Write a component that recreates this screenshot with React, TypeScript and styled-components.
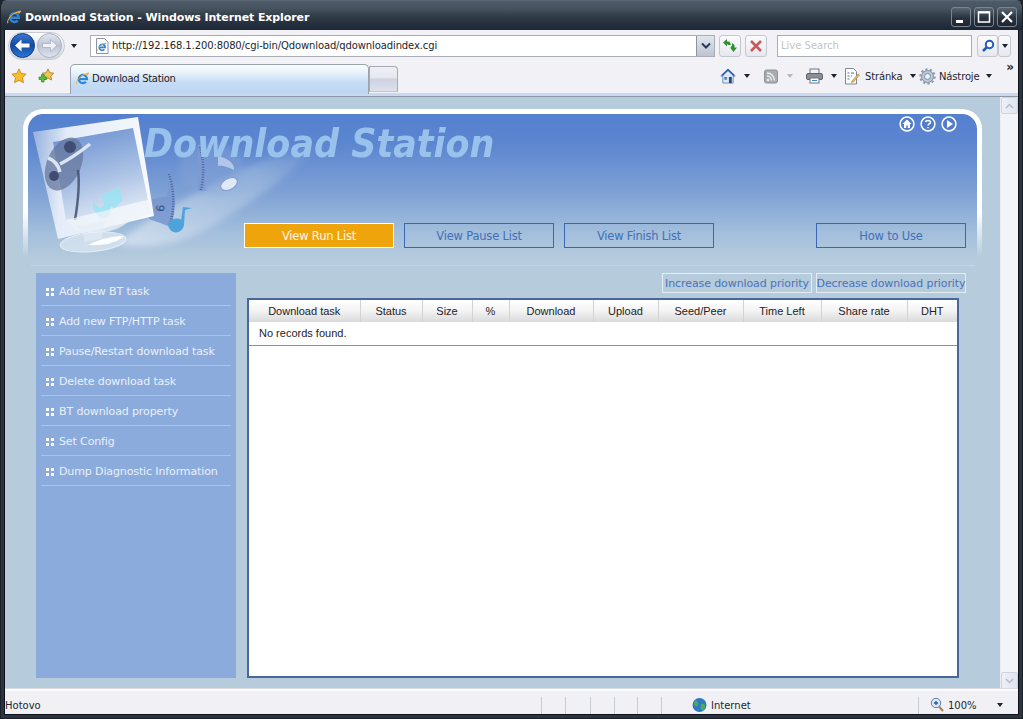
import React from "react";
import styled, { createGlobalStyle } from "styled-components";

const Global = createGlobalStyle`
  html, body { margin: 0; padding: 0; overflow: hidden; background: #1c2430; }
  * { box-sizing: border-box; }
`;

const UI = `"DejaVu Sans", Verdana, sans-serif`;
const ARIAL = `"Liberation Sans", Arial, sans-serif`;

const Win = styled.div`
  width: 1023px; height: 719px; display: flex; flex-direction: column;
  background: #2b3440; border-radius: 7px 7px 0 0; overflow: hidden;
  border: 1px solid #1a2028; border-top-color: #5a6674;
`;
const TitleBar = styled.div`
  height: 29px; flex: none; display: flex; align-items: center; padding: 3px 5px 0 5px; gap: 3px;
  background: linear-gradient(#4f5b69 0, #47535f 25%, #2f3a47 55%, #1d2634 100%);
`;
const TitleText = styled.div`
  font: bold 11px ${UI}; color: #fff; flex: 1; white-space: nowrap; letter-spacing: -0.1px;
`;
const WinButtons = styled.div`display: flex; gap: 3px;`;
const WinBtn = styled.div`
  width: 20px; height: 20px; border: 1px solid #7a8590; border-radius: 3px;
  background: linear-gradient(#5a6673, #28323e 55%, #1e2632);
  display: flex; align-items: center; justify-content: center;
`;
const Frame = styled.div`
  flex: 1; display: flex; flex-direction: column; margin: 0 3px 3px 3px; min-height: 0;
  border-left: 1px solid #0d1218; border-right: 1px solid #0d1218; border-bottom: 1px solid #0d1218;
`;
const Chrome = styled.div`
  height: 67px; flex: none; background: #f2f2f6; display: flex; flex-direction: column;
  border-bottom: 1px solid #8a97a5; box-shadow: inset 0 -3px 0 #c8d8ee;
`;
const AddressRow = styled.div`
  height: 30px; flex: none; display: flex; align-items: center; padding: 1px 0 0 3px;
`;
const NavPill = styled.div`
  display: flex; align-items: center; gap: 2px; height: 28px; width: 57px;
  border-radius: 14px; background: linear-gradient(#fdfdfe, #d4d8e0);
  padding: 0 1px; border: 1px solid #c6cad2;
`;
const SmallArrow = styled.span<{ $dim?: boolean }>`
  display: inline-block; width: 0; height: 0; border-left: 3.5px solid transparent; border-right: 3.5px solid transparent;
  border-top: 4px solid ${(p) => (p.$dim ? "#b5b8bd" : "#1c2230")};
`;
const NavDrop = styled.div`width: 18px; margin: 0 7px 0 0; display: flex; justify-content: center;`;
const AddressBox = styled.div`
  width: 625px; height: 22px; background: #fff; border: 1px solid #a9adb5; display: flex; align-items: center; padding-left: 3px; gap: 1px;
`;
const UrlText = styled.div`
  flex: 1; font: 10px ${UI}; color: #22262c; white-space: nowrap; letter-spacing: -0.12px; padding-left: 1px;
`;
const ComboBtn = styled.div`
  width: 18px; height: 20px; background: linear-gradient(#e2e6ee, #bcc4d2); border-left: 1px solid #8b93a0;
  display: flex; align-items: center; justify-content: center;
`;
const ToolBtn = styled.div<{ $ml?: number; $w?: number }>`
  width: ${(p) => p.$w ?? 22}px; height: 22px; margin-left: ${(p) => p.$ml ?? 0}px;
  border: 1px solid #c4c7cf; border-radius: 3px; background: linear-gradient(#fbfbfd, #e7e8ee);
  display: flex; align-items: center; justify-content: center;
`;
const SearchBox = styled.div`
  width: 195px; height: 22px; margin-left: 10px; background: #fff; border: 1px solid #a9adb5;
  font: 10px ${UI}; color: #c3c3c3; display: flex; align-items: center; padding-left: 3px;
`;
const TabRow = styled.div`
  height: 34px; flex: none; display: flex; align-items: flex-end; padding-left: 5px; position: relative;
`;
const FavIcons = styled.div`
  width: 60px; height: 100%; display: flex; align-items: center; gap: 11px; padding: 0 0 2px 1px;
`;
const ActiveTab = styled.div`
  width: 299px; height: 30px; border: 1px solid #9aa3ae; border-bottom: none; border-radius: 5px 5px 0 0;
  background: linear-gradient(#fafcfe, #eaf3fb 25%, #c6dcf5 60%, #bcd5f3);
  display: flex; align-items: center; padding: 0 0 2px 4px; gap: 2px;
  font: 10px ${UI}; color: #1d2229; letter-spacing: -.3px;
`;
const NewTab = styled.div`
  width: 29px; height: 26px; margin-bottom: 2px; border: 1px solid #a5abb5; border-bottom: 1px solid #c0c4cc; border-radius: 0 4px 0 0;
  background: linear-gradient(#eef0f5 0, #e6e8f0 45%, #cdd2e0 50%, #dde0ea);
`;
const Tools = styled.div`
  flex: 1; display: flex; align-items: center; height: 100%; padding: 0 0 2px 322px; font: 10px ${UI}; color: #22262c; letter-spacing: -.15px;
`;
const ToolItem = styled.div<{ $w: number }>`
  width: ${(p) => p.$w}px; display: flex; align-items: center; flex: none; white-space: nowrap;
`;
const ToolLabel = styled.span<{ $ml: number }>`margin: 0 7px 0 ${(p) => p.$ml}px;`;
const ToolGap = styled.span<{ $w: number }>`width: ${(p) => p.$w}px; flex: none;`;
const Chevrons = styled.div`
  position: absolute; right: 4px; top: 0; font: bold 12px ${UI}; color: #1c2230;
`;

const PageRow = styled.div`flex: 1; display: flex; min-height: 0;`;
const Page = styled.div`
  flex: 1; background: #b6cbdc; padding: 12px 18px 0 18px; min-width: 0; display: flex; flex-direction: column;
`;
const ScrollBar = styled.div`
  width: 18px; flex: none; background: #f3f4f7; border-left: 1px solid #eceef2; display: flex; flex-direction: column; justify-content: space-between;
`;
const ScrollBtn = styled.div`
  height: 17px; background: linear-gradient(90deg, #edf0f6, #dfe4ee); border: 1px solid #ced3dd; border-radius: 2px; display: flex; align-items: center; justify-content: center;
`;
const HeaderShell = styled.div`
  width: 959px; height: 156px; flex: none; padding: 5px 5px 0 5px; border-radius: 20px 20px 0 0;
  background: linear-gradient(#fff 0, #fff 66%, rgba(255,255,255,0) 95%);
`;
const Banner = styled.div`
  position: relative; height: 151px; border-radius: 15px 15px 0 0; overflow: hidden;
  background: linear-gradient(#5480cf 0, #5d86d0 20%, #7c9fd4 50%, #a2bedc 78%, #b6cbdc 96%);
  display: flex; flex-direction: column; padding: 2px 11px 0 216px;
`;
const TopIcons = styled.div`display: flex; justify-content: flex-end; gap: 5px; height: 16px; margin-right: 9px;`;
const Logo = styled.div`
  font: italic bold 35px ${UI}; color: #9cc6ee; height: 40px; line-height: 40px; margin: -8px 0 0 -100px; white-space: nowrap;
  letter-spacing: 0; position: relative; z-index: 1; transform: scaleY(1.12); opacity: .95;
`;
const Nav = styled.nav`display: flex; gap: 10px; margin-top: 59px; position: relative; z-index: 2;`;
const NavBtn = styled.div<{ $active?: boolean; $push?: boolean }>`
  width: 150px; height: 25px; display: flex; align-items: center; justify-content: center;
  font: 11.5px ${UI}; letter-spacing: -.2px;
  color: ${(p) => (p.$active ? "#fdf6e6" : "#4170b8")};
  background: ${(p) => (p.$active ? "#f0a40b" : "transparent")};
  border: 1px solid ${(p) => (p.$active ? "#fff" : "#3a67b5")};
  margin-left: ${(p) => (p.$push ? "auto" : "0")};
`;
const Art = styled.svg`position: absolute; left: 0; top: 0;`;
const Rule = styled.div`
  width: 944px; height: 1px; margin: 0 0 7px 8px; background: #c6d5e2; flex: none;
`;
const Main = styled.div`display: flex; gap: 11px; padding-left: 13px; flex: none;`;
const Side = styled.aside`
  width: 200px; height: 405px; background: #8cabdd; padding: 3px 5px 0 5px; flex: none;
`;
const SideItem = styled.div`
  height: 30px; border-bottom: 1px solid #a9c2e6; display: flex; align-items: center; gap: 5px; padding: 2px 0 0 5px;
  font: 11px ${UI}; letter-spacing: -.12px; color: #e9f0fa; white-space: nowrap;
`;
const Dots = styled.span`
  display: grid; grid-template-columns: 3px 3px; grid-auto-rows: 3px; gap: 2px; flex: none; width: 8px;
`;
const Dot = styled.i`display: block; background: #fff;`;
const Right = styled.div`width: 719px; flex: none;`;
const Priority = styled.div`display: flex; justify-content: flex-end; gap: 4px; height: 20px; margin-bottom: 5px;`;
const PriorityBtn = styled.div`
  width: 150px; height: 20px; border: 1px solid #e4edf4; color: #4a73b8; white-space: nowrap;
  font: 11px ${UI}; letter-spacing: -.1px; display: flex; align-items: center; justify-content: center;
`;
const TableBox = styled.div`
  width: 712px; height: 380px; background: #fff; border: 2px solid #46689f;
`;
const Table = styled.table`
  width: 708px; table-layout: fixed; border-collapse: collapse; font: 11px ${ARIAL}; color: #1f2226;
`;
const Th = styled.th`
  height: 22px; padding: 0; font-weight: normal; text-align: center;
  background: linear-gradient(#fff, #f3f3f3 50%, #d9d9d9);
  border-right: 1px solid #d3d3d3;
  &:last-child { border-right: none; }
`;
const Td = styled.td`
  height: 23px; padding: 0 0 1px 10px; border-bottom: 1px solid #8b8f96; background: #fff;
`;

const StatusBar = styled.div`
  height: 25px; flex: none; background: #f1f1f5; display: flex; align-items: center; padding-top: 5px;
  font: 10px ${UI}; color: #22262c; border-top: 2px solid #fafafc; box-shadow: 0 -1px 0 #d8dce2;
`;
const StatusText = styled.div`width: 536px;`;
const Cell = styled.div<{ $w: number }>`
  width: ${(p) => p.$w}px; height: 17px; border-left: 1px solid #c9ccd2; flex: none; display: flex; align-items: center; gap: 4px;
`;

const IE = ({ s = 16 }: { s?: number }) => (
  <svg width={s} height={s} viewBox="0 0 16 16" style={{ flex: "none" }}>
    <path d="M4.500 8.700h8.300A4.400 4.400 0 1 0 11.700 11.500" fill="none" stroke="#2d86d6" strokeWidth="2.400" />
    <path d="M1.500 14.500C-.5 11.500 6 3 14.500 1.500c1.500 1-1 3-2 3.500C13.500 3 10 3 6 6.500 3 9.500 1.500 12 2.500 13.500z" fill="#eeb03f" />
  </svg>
);
const NavCircle = ({ dir, on }: { dir: "l" | "r"; on?: boolean }) => (
  <svg width="25" height="25" viewBox="0 0 25 25" style={{ flex: "none" }}>
    <defs>
      <linearGradient id={"c" + dir} x1="0" y1="0" x2="0" y2="1">
        <stop offset="0" stopColor={on ? "#3e7ad0" : "#e3e7ef"} />
        <stop offset=".5" stopColor={on ? "#114aa4" : "#bcc4d4"} />
        <stop offset="1" stopColor={on ? "#2e78d6" : "#dfe4ee"} />
      </linearGradient>
    </defs>
    <circle cx="12.500" cy="12.500" r="12" fill={`url(#c${dir})`} stroke={on ? "#1a3f80" : "#aab1bf"} />
    <path
      d={dir === "l" ? "M5 12.500 11.500 6.500v4h8v4h-8v4z" : "M20 12.500 13.500 6.500v4h-8v4h8v4z"}
      fill={on ? "#fff" : "#eef1f6"}
      stroke={on ? "none" : "#a0a9ba"}
      strokeWidth=".7"
    />
  </svg>
);
const PageIcon = () => (
  <svg width="16" height="16" viewBox="0 0 16 16" style={{ flex: "none" }}>
    <path d="M2.500.5h8l3.500 3.500v11.500h-11.500z" fill="#fff" stroke="#8a94a3" />
    <g transform="translate(2.500 3.500) scale(.68)">
      <path d="M4.500 8.700h8.300A4.400 4.400 0 1 0 11.700 11.500" fill="none" stroke="#2d86d6" strokeWidth="2.400" />
      <path d="M1.500 14.500C-.5 11.500 6 3 14.500 1.500c1.500 1-1 3-2 3.500C13.500 3 10 3 6 6.500 3 9.500 1.500 12 2.500 13.500z" fill="#eeb03f" />
    </g>
  </svg>
);
const Star = () => (
  <svg width="16" height="16" viewBox="0 0 18 18" style={{ flex: "none" }}>
    <path d="M9 1l2.400 5.200 5.600.7-4.100 3.900 1.100 5.700L9 13.700 4 16.500l1.100-5.700L1 6.900l5.600-.7z" fill="#f7bf2e" stroke="#c98a14" />
  </svg>
);
const AddFav = () => (
  <svg width="16" height="16" viewBox="0 0 16 16" style={{ flex: "none" }}>
    <path d="M10 1l1.700 3.700 4 .5-2.900 2.800.8 4L10 10l-3.600 2 .8-4-2.900-2.800 4-.5z" fill="#f3c455" stroke="#b98a2a" />
    <path d="M3.500 6.500h2.500v2.500h2.500v2.500H6V14H3.500v-2.500H1V9h2.500z" fill="#5cbf3a" stroke="#2b8a1e" strokeWidth=".7" />
  </svg>
);
const HomeIcon = () => (
  <svg width="16" height="16" viewBox="0 0 17 17" style={{ flex: "none" }}>
    <path d="M8.500 1 .8 8.500h2.200v7.500h11V8.500h2.200z" fill="#dfe8f3" stroke="#6b8eb8" />
    <path d="M2 8 8.500 2 15 8" fill="none" stroke="#2c5fa8" strokeWidth="1.800" />
    <rect x="9.500" y="9.500" width="3" height="6.500" fill="#24487f" /><rect x="4.500" y="9.500" width="3" height="3" fill="#5a86bd" />
  </svg>
);
const Rss = () => (
  <svg width="14" height="15" viewBox="0 0 14 15" style={{ flex: "none" }}>
    <rect x=".5" y="1" width="13" height="13" rx="2" fill="#a9acaf" stroke="#8f9295" />
    <circle cx="4" cy="11" r="1.300" fill="#eee" />
    <path d="M3 7a4.500 4.500 0 0 1 4.500 4.500M3 4a7.500 7.500 0 0 1 7.500 7.500" fill="none" stroke="#eee" strokeWidth="1.400" />
  </svg>
);
const Printer = () => (
  <svg width="17" height="16" viewBox="0 0 17 16" style={{ flex: "none" }}>
    <rect x="4" y="1" width="9" height="5" fill="#eef0f3" stroke="#70757d" />
    <rect x=".5" y="5.500" width="16" height="6" rx="1.500" fill="#8b9098" stroke="#5f646b" />
    <rect x="4" y="10" width="9" height="5" fill="#fff" stroke="#70757d" />
    <rect x="6" y="12" width="5" height="1" fill="#3f86c9" />
  </svg>
);
const Doc = () => (
  <svg width="16" height="17" viewBox="0 0 16 17" style={{ flex: "none" }}>
    <path d="M1.500.5h8l3 3v12.500h-11z" fill="#fbfcfd" stroke="#7f8894" />
    <path d="M3.500 5h2M3.500 8h2M3.500 11h2M7 5h3M7 8h1" stroke="#6a7380" />
    <path d="M8 13l6-7 1.500 1-6 7-2 .5z" fill="#e8c060" stroke="#a58030" strokeWidth=".6" />
  </svg>
);
const Gear = () => (
  <svg width="17" height="17" viewBox="0 0 17 17" style={{ flex: "none" }}>
    <circle cx="8.500" cy="8.500" r="6" fill="#bcc8d6" stroke="#7f8ea0" />
    <circle cx="8.500" cy="8.500" r="7.200" fill="none" stroke="#8d9bac" strokeWidth="2" strokeDasharray="2.300 2.200" />
    <circle cx="8.500" cy="8.500" r="3" fill="#eaf0f7" stroke="#7890ab" />
  </svg>
);
const Circ = ({ children }: { children: React.ReactNode }) => (
  <svg width="16" height="16" viewBox="0 0 16 16">
    <circle cx="8" cy="8" r="6.900" fill="#4f7ccb" stroke="#fff" strokeWidth="1.500" />
    {children}
  </svg>
);

const columns = [
  ["Download task", 111], ["Status", 62], ["Size", 50], ["%", 37], ["Download", 84],
  ["Upload", 65], ["Seed/Peer", 85], ["Time Left", 78], ["Share rate", 86], ["DHT", 50],
] as const;
const menu = [
  "Add new BT task", "Add new FTP/HTTP task", "Pause/Restart download task", "Delete download task",
  "BT download property", "Set Config", "Dump Diagnostic Information",
];

const BannerArt = () => (
  <Art width="300" height="151" viewBox="0 0 300 151">
    <defs>
      <linearGradient id="frame" x1="0" y1=".4" x2="1" y2=".5">
        <stop offset="0" stopColor="#b4c8e8" stopOpacity=".75" /><stop offset=".25" stopColor="#e4ecf8" /><stop offset="1" stopColor="#f8fafd" />
      </linearGradient>
      <linearGradient id="screen" x1=".3" y1="0" x2=".6" y2="1">
        <stop offset="0" stopColor="#6f92d2" /><stop offset=".55" stopColor="#a8c0e4" /><stop offset="1" stopColor="#e2eaf5" />
      </linearGradient>
      <linearGradient id="swoosh" x1="0" y1="1" x2="1" y2="0">
        <stop offset="0" stopColor="#d3e1ee" stopOpacity=".95" /><stop offset=".7" stopColor="#a8c2e0" stopOpacity=".5" /><stop offset="1" stopColor="#8eaddb" stopOpacity="0" />
      </linearGradient>
      <filter id="soft"><feGaussianBlur stdDeviation=".6" /></filter>
      <filter id="softer"><feGaussianBlur stdDeviation="3" /></filter>
    </defs>
    <path d="M90 130C120 100 180 75 215 55c20-8 55-20 75-25-25 30-55 50-90 72-35 24-70 36-110 28z" fill="url(#swoosh)" filter="url(#softer)" />
    <path d="M172 80c-30-8-28-45 5-50 30-2 45 16 38 34-6 14-24 20-43 16z" fill="#88a6d8" opacity=".4" filter="url(#softer)" />
    <g filter="url(#soft)">
      <path d="M119 86l20-4c2-8 2-16 0-24l3-1c6 18 7 38 1 56l-22-8z" fill="#7a98d0" opacity=".9" />
      <path d="M141 60c5 16 6 33 1 50" stroke="#48669f" strokeWidth="2.500" strokeDasharray="1 1.500" fill="none" />
      <path d="M170 31l5-2 3 48-8 0z" fill="#7d9ad2" opacity=".8" />
      <path d="M172 33c4 13 4 30 1 43" stroke="#4a68a3" strokeWidth="2.500" strokeDasharray="1 1.500" fill="none" />
      <path d="M190 42c10 2 17 8 16 14-6-3-12-5-16-4z" fill="#c7d6ee" opacity=".75" />
    </g>
    <text x="0" y="0" transform="translate(136 98) rotate(-85)" fontFamily={UI} fontSize="11" fill="#34507f">6</text>
    <ellipse cx="201" cy="70" rx="9" ry="5.500" transform="rotate(-28 201 70)" fill="#dfe9f8" stroke="#7d9ad0" />
    <path d="M140 110c1 11 14 11 16 1l1-15 7-2-9-1-2 13c-4-3-10-1-13 4z" fill="#4ea3dc" />
    <path d="M5 18 110 3l16 99-96 23z" fill="url(#frame)" />
    <path d="M25 28 105 14l15 72-82 20z" fill="url(#screen)" />
    <g filter="url(#soft)">
      <ellipse cx="36" cy="50" rx="17" ry="28" transform="rotate(24 36 50)" fill="#66779c" opacity=".75" />
      <circle cx="42" cy="33" r="6" fill="#3f4e72" />
      <circle cx="26" cy="62" r="5" fill="#3f4e72" />
      <path d="M62 30C52 38 44 44 32 50M20 44c6 2 10 6 12 14" stroke="#dbe4f2" strokeWidth="3.500" fill="none" />
      <path d="M50 56c2 16 0 32-3 50" stroke="#41506f" strokeWidth="2.500" fill="none" opacity=".85" />
    </g>
    <path d="M65 88 72 94l4-3-2-10 16-8 5 13-8 8-4-2-2 10-8 3-8-10z" fill="#9be4f3" opacity=".85" filter="url(#soft)" />
    <path d="M38 106l42-10 40-10 4 14-22 6c-10 12-40 18-56 8z" fill="#eef3f9" opacity=".75" />
    <ellipse cx="65" cy="128" rx="33" ry="9.500" transform="rotate(-6 65 128)" fill="#d9e5f1" opacity=".8" stroke="#f4f8fc" />
    <path d="M60 131c14-7 26-9 36-9-6 6-18 10-36 9z" fill="#fff" opacity=".95" />
    <path d="M48 112l30-5c-2 6-4 12-4 18l-18 3c1-6-2-11-8-16z" fill="#e4ecf5" opacity=".6" />
  </Art>
);

export default function App() {
  return (
    <Win>
      <Global />
      <TitleBar>
        <IE s={16} />
        <TitleText>Download Station - Windows Internet Explorer</TitleText>
        <WinButtons>
          <WinBtn><svg width="14" height="14"><rect x="2" y="10" width="7" height="3" fill="#fff" /></svg></WinBtn>
          <WinBtn><svg width="14" height="14"><rect x="1.500" y="2" width="11" height="10" fill="none" stroke="#fff" strokeWidth="1.500" /><rect x="1" y="1.500" width="12" height="2" fill="#fff" /></svg></WinBtn>
          <WinBtn><svg width="14" height="14"><path d="M2 2l10 10M12 2 2 12" stroke="#fff" strokeWidth="2.200" /></svg></WinBtn>
        </WinButtons>
      </TitleBar>
      <Frame>
        <Chrome>
          <AddressRow>
            <NavPill><NavCircle dir="l" on /><NavCircle dir="r" /></NavPill>
            <NavDrop><SmallArrow /></NavDrop>
            <AddressBox>
              <PageIcon />
              <UrlText>http://192.168.1.200:8080/cgi-bin/Qdownload/qdownloadindex.cgi</UrlText>
              <ComboBtn><svg width="10" height="8"><path d="M1 1.500 5 5.500 9 1.500" fill="none" stroke="#2b3a55" strokeWidth="2" /></svg></ComboBtn>
            </AddressBox>
            <ToolBtn $ml={4}>
              <svg width="16" height="15" viewBox="0 0 16 15">
                <path d="M1 4.500 5 1v2.500h2.500L9 7H6.500L5 6H5v2.500z" fill="#2f8f2f" />
                <path d="M11.500 14 15 9.500h-2.500V7L10 5v3l-1 .5v1H8z" fill="#2f8f2f" />
              </svg>
            </ToolBtn>
            <ToolBtn $ml={4}>
              <svg width="14" height="14"><path d="M2 2l10 10M12 2 2 12" stroke="#c85a5a" strokeWidth="2.600" /></svg>
            </ToolBtn>
            <SearchBox>Live Search</SearchBox>
            <ToolBtn $ml={5} $w={21}>
              <svg width="14" height="14"><circle cx="8.500" cy="5.500" r="3.700" fill="#fff" stroke="#1c5cc4" strokeWidth="2" /><path d="M6 8 2 12" stroke="#1c5cc4" strokeWidth="2.500" /></svg>
            </ToolBtn>
            <ToolBtn $w={13}><SmallArrow /></ToolBtn>
          </AddressRow>
          <TabRow>
            <FavIcons><Star /><AddFav /></FavIcons>
            <ActiveTab><IE s={15} />Download Station</ActiveTab>
            <NewTab />
            <Tools>
              <ToolItem $w={44}><HomeIcon /><ToolGap $w={8} /><SmallArrow /></ToolItem>
              <ToolItem $w={42}><Rss /><ToolGap $w={9} /><SmallArrow $dim /></ToolItem>
              <ToolItem $w={38}><Printer /><ToolGap $w={8} /><SmallArrow /></ToolItem>
              <ToolItem $w={75}><Doc /><ToolLabel $ml={5}>Stránka</ToolLabel><SmallArrow /></ToolItem>
              <ToolItem $w={70}><Gear /><ToolLabel $ml={3}>Nástroje</ToolLabel><SmallArrow /></ToolItem>
            </Tools>
            <Chevrons>»</Chevrons>
          </TabRow>
        </Chrome>
        <PageRow>
          <Page>
            <HeaderShell>
              <Banner>
                <BannerArt />
                <TopIcons>
                  <Circ><path d="M8 3.500 3.500 8h1.500v4h2.200V9.500h1.600V12H11V8h1.500z" fill="#fff" /></Circ>
                  <Circ><path d="M5.500 6.200C5.800 3.800 10.500 3.800 10.500 6.200c0 1.600-2.500 1.800-2.500 3.300M8 11v1.200" fill="none" stroke="#fff" strokeWidth="1.500" /></Circ>
                  <Circ><path d="M6 4v8l6-4z" fill="#fff" /></Circ>
                </TopIcons>
                <Logo>Download Station</Logo>
                <Nav>
                  <NavBtn $active>View Run List</NavBtn>
                  <NavBtn>View Pause List</NavBtn>
                  <NavBtn>View Finish List</NavBtn>
                  <NavBtn $push>How to Use</NavBtn>
                </Nav>
              </Banner>
            </HeaderShell>
            <Rule />
            <Main>
              <Side>
                {menu.map((m) => (
                  <SideItem key={m}>
                    <Dots><Dot /><Dot /><Dot /><Dot /></Dots>
                    {m}
                  </SideItem>
                ))}
              </Side>
              <Right>
                <Priority>
                  <PriorityBtn>Increase download priority</PriorityBtn>
                  <PriorityBtn>Decrease download priority</PriorityBtn>
                </Priority>
                <TableBox>
                  <Table>
                    <colgroup>
                      {columns.map(([n, w]) => <col key={n} style={{ width: w }} />)}
                    </colgroup>
                    <thead>
                      <tr>{columns.map(([n]) => <Th key={n}>{n}</Th>)}</tr>
                    </thead>
                    <tbody>
                      <tr><Td colSpan={10}>No records found.</Td></tr>
                    </tbody>
                  </Table>
                </TableBox>
              </Right>
            </Main>
          </Page>
          <ScrollBar>
            <ScrollBtn><svg width="9" height="6"><path d="M1 5 4.500 1.500 8 5" fill="none" stroke="#b5bccb" strokeWidth="1.500" /></svg></ScrollBtn>
            <ScrollBtn><svg width="9" height="6"><path d="M1 1 4.500 4.500 8 1" fill="none" stroke="#b5bccb" strokeWidth="1.500" /></svg></ScrollBtn>
          </ScrollBar>
        </PageRow>
        <StatusBar>
          <StatusText>Hotovo</StatusText>
          <Cell $w={24} /><Cell $w={25} /><Cell $w={24} /><Cell $w={23} /><Cell $w={24} />
          <Cell $w={257}>
            <svg width="15" height="16" viewBox="0 0 15 16" style={{ marginLeft: 30 }}><circle cx="7.500" cy="8" r="7" fill="#2f78c4" /><path d="M3 3c3 1 4 3 3 5s-3 1-4 0M9 7c3-1 5 1 4 4s-3 3-4 1 0-3 0-5z" fill="#4dae4d" /></svg>
            Internet
          </Cell>
          <Cell $w={96}>
            <svg width="14" height="16" viewBox="0 0 14 16" style={{ marginLeft: 11 }}><circle cx="6" cy="6" r="4.700" fill="#dfe9f6" stroke="#5a7fae" /><path d="M4 6h4M6 4v4" stroke="#1c5cc4" strokeWidth="1.300" /><path d="M9 9.500l4 4.500" stroke="#b0814a" strokeWidth="2" /></svg>
            100%
            <ToolGap $w={12} /><SmallArrow />
          </Cell>
        </StatusBar>
      </Frame>
    </Win>
  );
}
